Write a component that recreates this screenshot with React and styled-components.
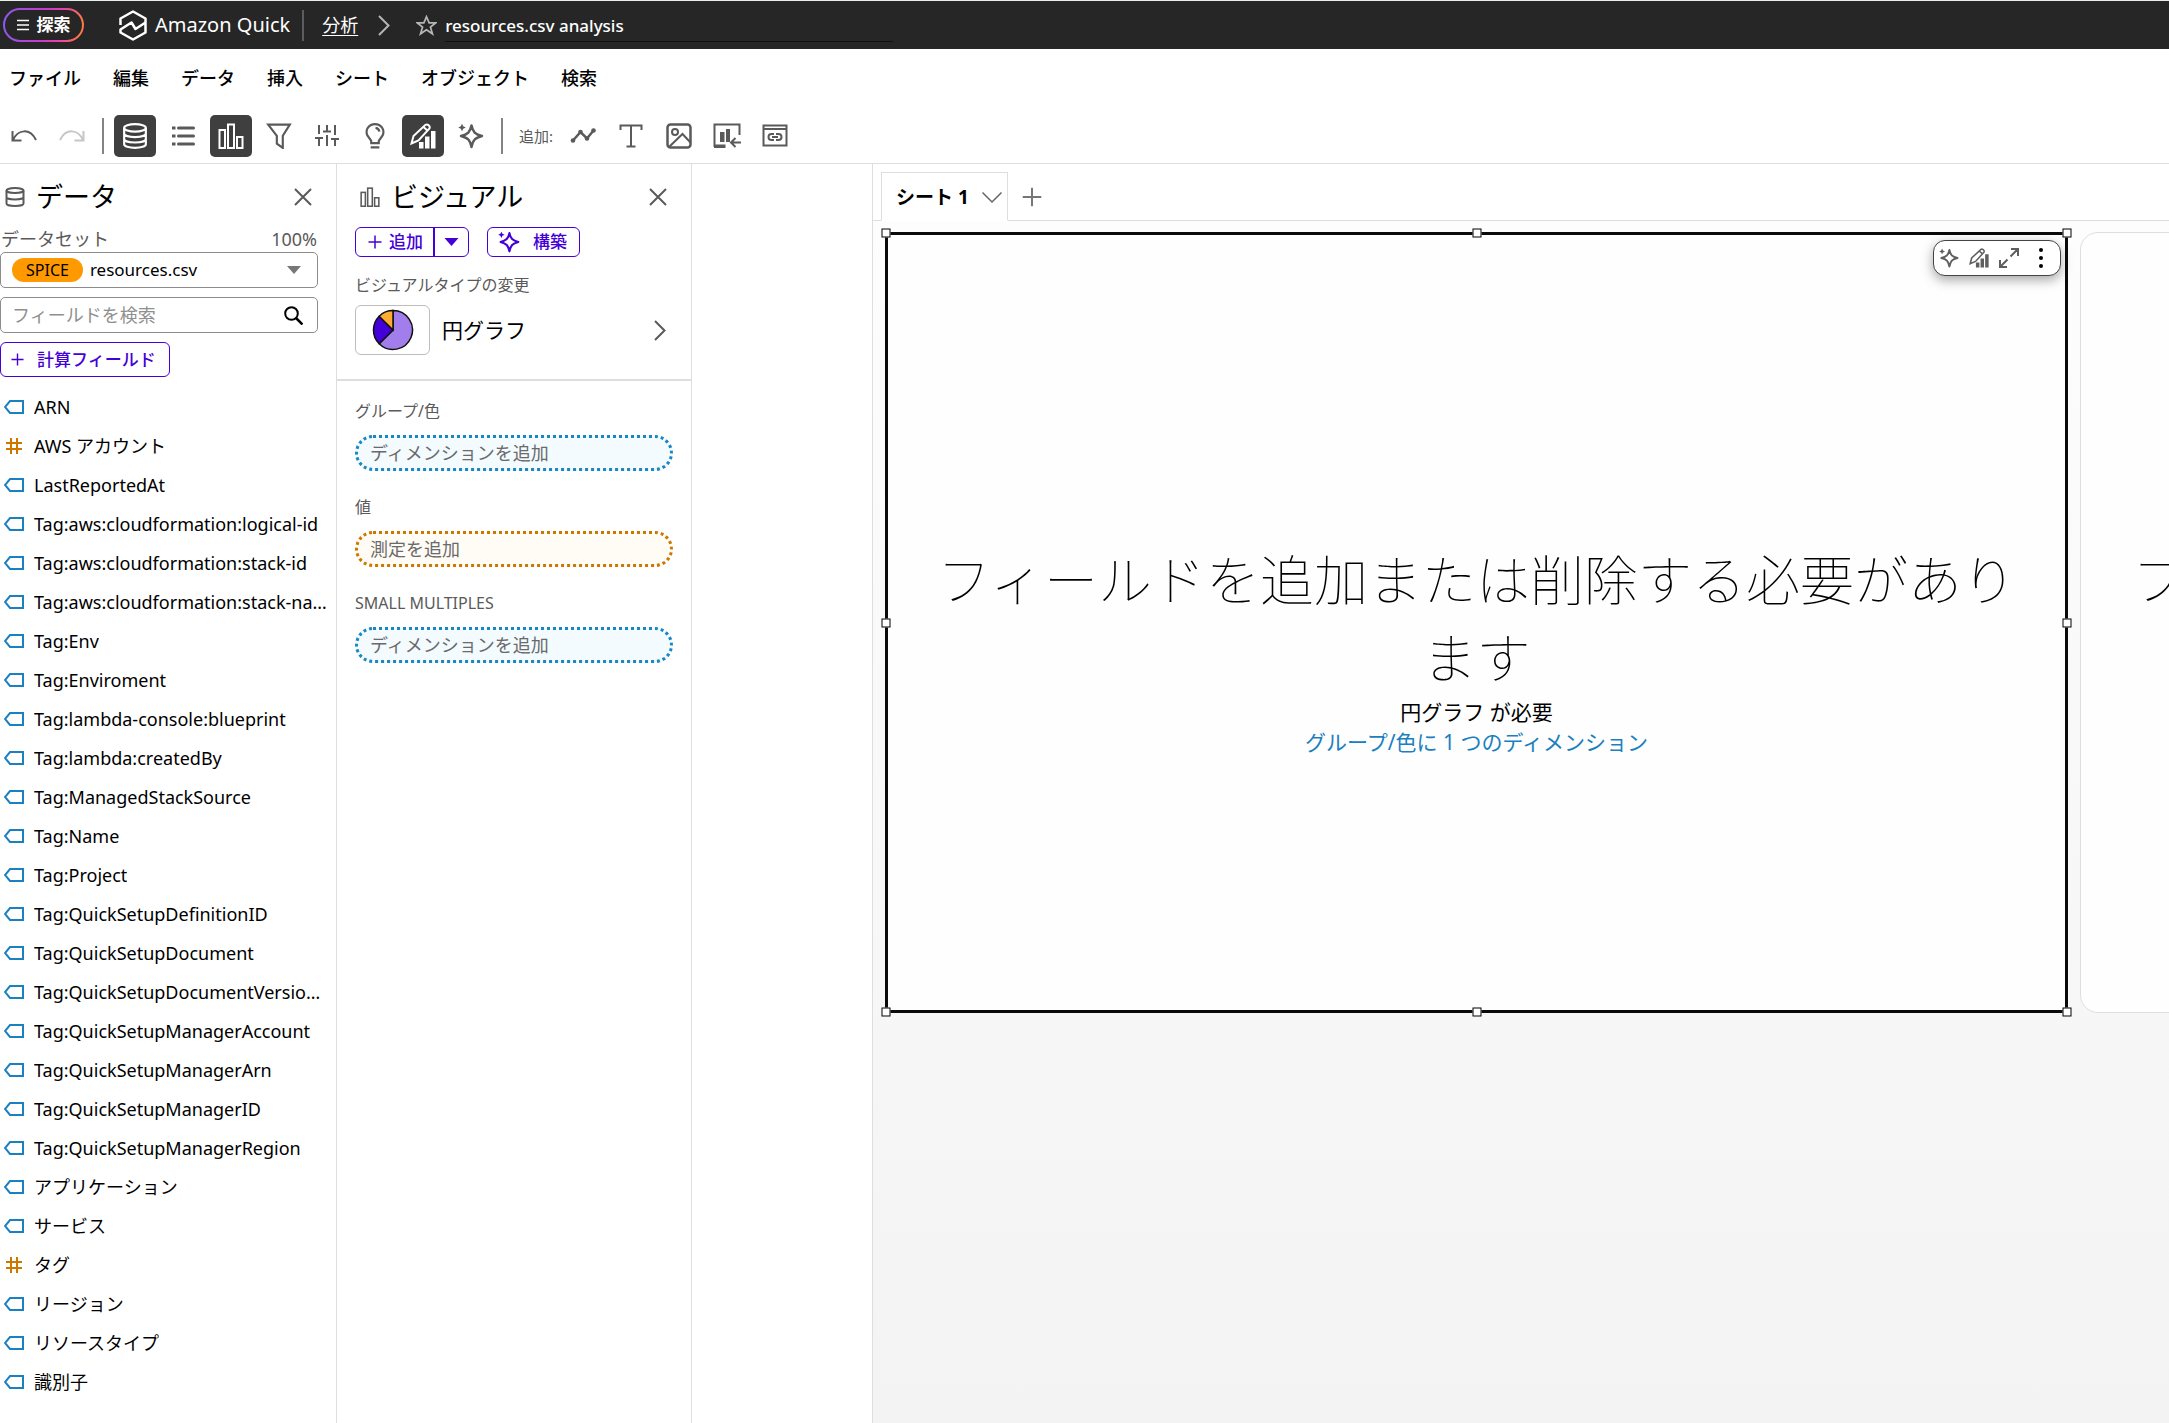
import React, { useState } from "react";
import styled, { createGlobalStyle, css } from "styled-components";

const GlobalStyle = createGlobalStyle`
  * {
    box-sizing: border-box;
  }

  body {
    margin: 0;
    background: #fff;
    color: #000;
    font-family: "Noto Sans", "Noto Sans CJK JP", sans-serif;
    font-size: 18px;
    line-height: 24px;
    overflow: hidden;
  }

  button, input, select {
    font: inherit;
    color: inherit;
    margin: 0;
    padding: 0;
    border: 0;
    background: none;
  }

  svg {
    display: block;
    flex: none;
  }

  h2 {
    margin: 0;
  }
`;

const Page = styled.div`
  display: flex;
  flex-direction: column;
  height: 100vh;
`;

/* ---------- header ---------- */

const Header = styled.header`
  display: flex;
  align-items: center;
  height: 49px;
  padding-left: 3px;
  background: #262626;
  border-top: 1px solid #e6efea;
  color: #fff;
`;

const ExploreButton = styled.button`
  display: flex;
  align-items: center;
  justify-content: center;
  gap: 8px;
  width: 81px;
  height: 34px;
  border: 2px solid transparent;
  border-radius: 17px;
  background:
    linear-gradient(#262626, #262626) padding-box,
    linear-gradient(100deg, #8a5cf0 0%, #c03ccf 45%, #e83fb0 70%, #ff7a45 95%) border-box;
  font-size: 17px;
  font-weight: 700;
`;

const Brand = styled.a`
  display: flex;
  align-items: center;
  gap: 8px;
  margin-left: 35px;
  padding-right: 12px;
  border-right: 2px solid #5c5c5c;
  color: #fff;
  font-size: 20px;
  line-height: 30px;
  text-decoration: none;
`;

const Crumb = styled.a`
  margin: 0 20px 0 18px;
  color: #fff;
  text-decoration: underline;
  text-underline-offset: 3px;
`;

const AnalysisTitle = styled.div`
  display: flex;
  align-items: center;
  gap: 8px;
  margin-left: 26px;
  font-size: 17px;
  font-weight: 500;
`;

const TitleText = styled.span`
  width: 448px;
  padding: 5px 4px 3px 0;
  border-bottom: 1px solid #111;
`;

const MenuBar = styled.nav`
  display: flex;
  align-items: center;
  gap: 32px;
  height: 58px;
  padding-left: 9px;
`;

const MenuItem = styled.button`
  font-weight: 500;
`;

/* ---------- toolbar ---------- */

const Toolbar = styled.div`
  display: flex;
  align-items: center;
  gap: 6px;
  height: 57px;
  padding: 1px 0 0 3px;
  border-bottom: 1px solid #dedede;
`;

const ToolButton = styled.button`
  display: grid;
  place-items: center;
  width: 42px;
  height: 42px;
  border-radius: 5px;
  color: ${(p) => (p.$on ? "#fff" : p.$faded ? "#c6c6c6" : "#5a5a5a")};
  background: ${(p) => (p.$on ? "#3f3f3f" : "transparent")};
`;

const ToolDivider = styled.span`
  width: 2px;
  height: 36px;
  margin: 0 ${(p) => p.$right}px 0 ${(p) => p.$left}px;
  background: #848484;
`;

const ToolLabel = styled.span`
  margin-right: 3px;
  color: #5a5a5a;
  font-size: 15px;
`;

/* ---------- panels ---------- */

const Workspace = styled.div`
  display: flex;
  flex: 1;
  min-height: 0;
`;

const Panel = styled.section`
  flex: none;
  width: ${(p) => p.$width}px;
  border-right: 1px solid #dedede;
`;

const PanelHeader = styled.div`
  display: flex;
  align-items: center;
  gap: 11px;
  padding: ${(p) => p.$pad};
  color: #5a5a5a;

  h2 {
    flex: 1;
    color: #000;
    font-size: 27px;
    font-weight: 400;
    line-height: 36px;
  }
`;

const CloseButton = styled.button`
  display: grid;
  place-items: center;
  width: 24px;
  height: 24px;
`;

const DataBody = styled.div`
  display: flex;
  flex-direction: column;
  gap: 9px;
  padding-right: 18px;
`;

const DatasetLine = styled.div`
  display: flex;
  justify-content: space-between;
  padding: 0 1px;
  color: #5a5a5a;
`;

const boxed = css`
  display: flex;
  align-items: center;
  height: 36px;
  border: 1px solid #8c8c8c;
  border-radius: 5px;
`;

const DatasetBox = styled.div`
  ${boxed}
  gap: 7px;
  margin-top: -8px;
  padding: 0 16px 0 11px;

  select {
    flex: 1;
    min-width: 0;
    appearance: none;
    font-size: 17px;
  }

  > svg {
    color: #777;
  }
`;

const SpiceBadge = styled.span`
  padding: 0 14px;
  border-radius: 12px;
  background: #ff9900;
  font-size: 16px;
`;

const SearchBox = styled.div`
  ${boxed}
  padding: 0 14px 0 11px;

  input {
    flex: 1;
    min-width: 0;
    outline: 0;
  }

  input::placeholder {
    color: #8f8f8f;
    opacity: 1;
  }
`;

const outlined = css`
  border: 1px solid #4400d8;
  border-radius: 6px;
  color: #4400d8;
  font-size: 17px;
  font-weight: 500;
`;

const CalcButton = styled.button`
  ${outlined}
  display: flex;
  align-items: center;
  align-self: flex-start;
  gap: 13px;
  height: 35px;
  padding: 0 13px 0 10px;
`;

const FieldList = styled.ul`
  margin: 10px 0 0;
  padding: 0;
  list-style: none;
`;

const FieldRow = styled.li`
  display: flex;
  align-items: center;
  gap: 10px;
  height: 39px;
  padding: 0 4px;

  span {
    overflow: hidden;
    text-overflow: ellipsis;
    white-space: nowrap;
  }
`;

const VisualTop = styled.div`
  padding: 0 18px 24px;
  border-bottom: 2px solid #dedede;
`;

const ButtonRow = styled.div`
  display: flex;
  gap: 18px;
  margin-bottom: 16px;
`;

const SplitButton = styled.div`
  ${outlined}
  display: flex;
  height: 30px;
`;

const AddButton = styled.button`
  display: flex;
  align-items: center;
  gap: 7px;
  padding: 0 10px 0 12px;
  border-right: 2px solid #4400d8;
`;

const AddMenuButton = styled.button`
  display: grid;
  place-items: center;
  width: 33px;
`;

const BuildButton = styled.button`
  ${outlined}
  display: flex;
  align-items: center;
  gap: 13px;
  height: 30px;
  padding: 0 12px 0 10px;
`;

const SmallLabel = styled.div`
  color: #5a5a5a;
  font-size: 16px;
`;

const TypeRow = styled.button`
  display: flex;
  align-items: center;
  gap: 12px;
  width: 100%;
  margin-top: 8px;
  padding-right: 7px;
  font-size: 21px;
  text-align: left;

  span {
    flex: 1;
  }
`;

const TypePreview = styled.div`
  display: grid;
  place-items: center;
  width: 75px;
  height: 50px;
  border: 1px solid #bdbdbd;
  border-radius: 6px;
`;

const Wells = styled.div`
  display: flex;
  flex-direction: column;
  gap: 24px;
  padding: 18px;
`;

const Well = styled.div`
  display: flex;
  flex-direction: column;
  gap: 12px;
`;

const DropZone = styled.button`
  height: 36px;
  padding-left: 12px;
  border: 3px dotted ${(p) => (p.$measure ? "#cc7700" : "#1a86c4")};
  border-radius: 18px;
  background: ${(p) => (p.$measure ? "#fffcf6" : "#f3fbff")};
  color: #6a6a6a;
  line-height: 28px;
  text-align: left;
`;

/* ---------- sheet ---------- */

const Sheet = styled.main`
  display: flex;
  flex: 1;
  flex-direction: column;
  min-width: 0;
  margin-left: 180px;
  border-left: 1px solid #dedede;
`;

const TabStrip = styled.div`
  display: flex;
  align-items: flex-end;
  height: 57px;
  padding-left: 8px;
  box-shadow: inset 0 -1px #dedede;
`;

const SheetTab = styled.button`
  display: flex;
  align-items: center;
  gap: 13px;
  height: 49px;
  padding: 0 5px 0 14px;
  border: 1px solid #dedede;
  border-bottom-color: #fff;
  background: #fff;
  font-size: 19px;
  font-weight: 700;
`;

const AddSheetButton = styled.button`
  display: grid;
  place-items: center;
  width: 49px;
  height: 49px;
  color: #777;
`;

const Canvas = styled.div`
  display: flex;
  flex: 1;
  align-items: flex-start;
  gap: 12px;
  padding: 11px 0 0 12px;
  background: linear-gradient(#fdfdfd, #f3f3f3);
  overflow: hidden;
`;

const VisualCard = styled.article`
  position: relative;
  display: flex;
  flex: 0 0 calc(100% - 101px);
  flex-direction: column;
  align-items: center;
  justify-content: center;
  min-height: 781px;
  padding: 52px 36px 0;
  border: ${(p) => (p.$selected ? "3px solid #0a0a0a" : "1px solid #dedede")};
  border-radius: ${(p) => (p.$selected ? 0 : 18)}px;
  background: #fefefe;
  font-size: 21px;
  line-height: 30px;
  text-align: center;

  h2 {
    font-size: 54px;
    font-weight: 100;
    line-height: 78px;
    word-break: break-all;
  }

  a {
    color: #1a80c0;
    text-decoration: none;
  }
`;

const HandleFrame = styled.div`
  position: absolute;
  inset: -2px;
  pointer-events: none;
`;

const Handle = styled.i`
  position: absolute;
  left: ${(p) => p.$x}%;
  top: ${(p) => p.$y}%;
  width: 9px;
  height: 9px;
  border: 1px solid #000;
  background: #fff;
  transform: translate(-50%, -50%);
`;

const VisualTools = styled.div`
  position: absolute;
  top: 5px;
  right: 4px;
  display: flex;
  align-items: center;
  height: 36px;
  padding: 0 3px 0 0;
  border: 1px solid #444;
  border-radius: 12px;
  background: #fff;
  box-shadow: 0 4px 12px rgba(0, 0, 0, 0.35);
  color: #5f5f5f;

  button {
    display: grid;
    place-items: center;
    width: 30px;
    height: 34px;
  }

  button:last-child {
    width: 33px;
    color: #000;
  }
`;

/* ---------- icons ---------- */

const Icon = ({ size = 24, box = 24, width = 2, children }) => (
  <svg
    width={size}
    height={size}
    viewBox={`0 0 ${box} ${box}`}
    fill="none"
    stroke="currentColor"
    strokeWidth={width}
    aria-hidden="true"
  >
    {children}
  </svg>
);

const UndoIcon = () => (
  <Icon size={26} box={26}>
    <path d="M1.500 8v9.500h9M2 17C7 6 19 5 25 17" />
  </Icon>
);

const RedoIcon = () => (
  <Icon size={26} box={26}>
    <path d="M24.500 8v9.500h-9M24 17C19 6 7 5 1 17" />
  </Icon>
);

const DatabaseIcon = ({ size = 26, width = 2 }) => (
  <Icon size={size} width={width}>
    <ellipse cx="12" cy="4.500" rx="10" ry="3.500" />
    <path d="M2 4.500v15C2 21.500 6.500 23 12 23s10-1.500 10-3.500v-15M2 9.700c0 2 4.500 3.300 10 3.300s10-1.300 10-3.300M2 14.700C2 16.700 6.500 18 12 18s10-1.300 10-3.300" />
  </Icon>
);

// panel title version, with one band only
const SmallDatabaseIcon = () => (
  <Icon size={20} box={20}>
    <ellipse cx="10" cy="3.500" rx="8.500" ry="2.500" />
    <path d="M1.500 3.500v13c0 1.500 3.800 2.500 8.500 2.500s8.500-1 8.500-2.500v-13M1.500 10c0 1.500 3.800 2.500 8.500 2.500s8.500-1 8.500-2.500" />
  </Icon>
);

const ListIcon = () => (
  <Icon width={3}>
    <path d="M7.500 4h15M7.500 12h15M7.500 20h15" strokeLinecap="round" />
    <path d="M1 4h3.500M1 12h3.500M1 20h3.500" />
  </Icon>
);

const BarsIcon = ({ size = 26, width = 2 }) => (
  <Icon size={size} width={width} box={26}>
    <rect x="1.500" y="7" width="5.500" height="18" />
    <rect x="10" y="1.500" width="6" height="23.500" />
    <rect x="19" y="14" width="5.500" height="11" />
  </Icon>
);

const FilterIcon = () => (
  <Icon size={26}>
    <path d="M2 1.500h20l-6.500 10.300V23l-5.500-4v-7.200z" />
  </Icon>
);

const SlidersIcon = () => (
  <Icon>
    <path d="M4 1v9M0 14h8M4 14v8M12 1v6M8 7.500h8M12 11v11M20 1v10M16 15h8M20 15v7" />
  </Icon>
);

const BulbIcon = () => (
  <Icon size={26}>
    <path d="M8.500 18.500v-2L5 11.500C2.500 6 6.500 1 12 1s9.500 5 7 10.500l-3.500 5v2zM8 22.500h8M12.500 4.500c2 .3 3.300 1.600 3.500 3.500" />
  </Icon>
);

const EditChartIcon = ({ size = 26 }) => (
  <Icon size={size} box={26}>
    <path d="M1.500 20.500l2-7.500L15.500 1.800c2-1.200 5 1.400 4 3.600L8.500 17.500zM14 4.500l4 3.500" />
    <path d="M9 19h4.500v6.500H9zM15 13.500h4.500v12H15zM21 8h4.500v17.500H21z" fill="currentColor" stroke="none" />
  </Icon>
);

const SparkleIcon = ({ size = 26 }) => (
  <Icon size={size} box={26}>
    <path
      d="M13.500 2.500c1.500 6.500 3.500 8.800 10.500 10.500-7 1.700-9 4-10.500 11-1.500-7-3.500-9.300-10.500-11 7-1.700 9-4 10.500-10.500z"
      strokeLinejoin="round"
      strokeWidth="2.500"
    />
    <path d="M4 .8l1.200 2.500L7.800 4.500 5.200 5.700 4 8.200 2.800 5.700.3 4.500l2.500-1.200z" fill="currentColor" stroke="none" />
  </Icon>
);

const LineIcon = () => (
  <Icon size={26} box={26} width={2.5}>
    <path d="M3 17.500L10.500 9l6.500 6.500 6.500-8" />
    <g fill="currentColor" stroke="none">
      <circle cx="3" cy="17.500" r="2.300" />
      <circle cx="10.500" cy="9" r="2.300" />
      <circle cx="17" cy="15.500" r="2.300" />
      <circle cx="23.500" cy="7.500" r="2.300" />
    </g>
  </Icon>
);

const TextIcon = () => (
  <Icon>
    <path d="M1.500 6V1.500h21V6M12 1.500v21M7.500 22.500h9" />
  </Icon>
);

const ImageIcon = () => (
  <Icon size={26} box={26}>
    <rect x="1.500" y="1.500" width="23" height="23" rx="3" strokeWidth="2.500" />
    <circle cx="9" cy="9" r="3" />
    <path d="M3.500 23.500L16.500 11l8 8.500" />
  </Icon>
);

const InsertChartIcon = () => (
  <Icon size={28} box={28}>
    <path d="M1.500 25V2.500h25V13M28 20.500H18M22.500 16L18 20.500l4.500 4.500" />
    <path d="M7 10h4.500v10H7zM13 7h4v13h-4zM1 22.500h11.500V26H1z" fill="currentColor" stroke="none" />
  </Icon>
);

const EmbedIcon = () => (
  <Icon size={26} box={26}>
    <rect x="1.500" y="2.500" width="23" height="20" />
    <path d="M1.500 6h23" />
    <path d="M12 11h-2.500a3 3 0 0 0 0 6H12M14 11h2.500a3 3 0 0 1 0 6H14M10 14h6" />
  </Icon>
);

const CloseIcon = () => (
  <Icon size={18} box={18}>
    <path d="M1 1l16 16M17 1L1 17" />
  </Icon>
);

const PlusIcon = ({ size = 14, width = 1.5 }) => (
  <Icon size={size} box={14} width={width}>
    <path d="M7 .5v13M.5 7h13" />
  </Icon>
);

const CaretIcon = ({ size = 14 }) => (
  <svg width={size} height="8" viewBox="0 0 14 8" fill="currentColor" aria-hidden="true">
    <path d="M0 0h14L7 8z" />
  </svg>
);

const ChevronIcon = ({ color }) => (
  <svg width="12" height="21" viewBox="0 0 12 21" fill="none" stroke={color} strokeWidth="2" aria-hidden="true">
    <path d="M1 1l9.500 9.500L1 20" />
  </svg>
);

const SearchIcon = () => (
  <Icon size={19} box={19} width={2}>
    <circle cx="7.500" cy="7.500" r="6.300" />
    <path d="M12 12l6.500 6.500" strokeWidth="2.500" />
  </Icon>
);

const StarIcon = () => (
  <Icon size={21} width={2}>
    <path d="M12 2l3 7h7.500l-6 4.800 2.300 7.700-6.800-4.600-6.800 4.600 2.300-7.700-6-4.800H9z" stroke="#b5b5b5" />
  </Icon>
);

const QuickLogo = () => (
  <svg width="28" height="31" viewBox="0 0 28 31" fill="none" stroke="#fff" strokeWidth="2.500" aria-hidden="true">
    <path d="M1.500 15V8.500L14 1.500l12.500 7v4L16.500 19l-4-6.500L1.500 19.500V22.500L14 29.500l12.500-7V13" strokeLinejoin="round" />
  </svg>
);

const PieIcon = () => (
  <svg width="42" height="42" viewBox="-21 -21 42 42" stroke="#111" strokeWidth="1.500" aria-hidden="true">
    <path d="M0 0V-19.500A19.500 19.500 0 1 1-13.800 13.800z" fill="#a17eec" />
    <path d="M0 0L-13.800 13.800A19.500 19.500 0 0 1-13.800-13.800z" fill="#4400d8" />
    <path d="M0 0L-13.800-13.800A19.500 19.500 0 0 1 0-19.500z" fill="#ffac33" />
  </svg>
);

const StringFieldIcon = () => (
  <svg width="20" height="14" viewBox="0 0 20 14" fill="none" stroke="#1a80c0" strokeWidth="2" aria-hidden="true">
    <path d="M6 1h13v12H6L1 7z" />
  </svg>
);

const NumberFieldIcon = () => (
  <svg width="20" height="16" viewBox="0 0 20 16" fill="none" stroke="#cc7700" strokeWidth="2" aria-hidden="true">
    <path d="M7 0v16M13 0v16M2 5h16M2 11h16" />
  </svg>
);

const ExpandIcon = () => (
  <Icon size={20} box={20}>
    <path d="M12 1h7v7M19 1l-7.500 7.500M8 19H1v-7M1 19l7.500-7.500" />
  </Icon>
);

const DotsIcon = () => (
  <svg width="4" height="20" viewBox="0 0 4 20" fill="currentColor" aria-hidden="true">
    <circle cx="2" cy="2" r="2" />
    <circle cx="2" cy="10" r="2" />
    <circle cx="2" cy="18" r="2" />
  </svg>
);

/* ---------- data ---------- */

const menus = ["ファイル", "編集", "データ", "挿入", "シート", "オブジェクト", "検索"];

const fields = [
  "ARN",
  "AWS アカウント",
  "LastReportedAt",
  "Tag:aws:cloudformation:logical-id",
  "Tag:aws:cloudformation:stack-id",
  "Tag:aws:cloudformation:stack-na…",
  "Tag:Env",
  "Tag:Enviroment",
  "Tag:lambda-console:blueprint",
  "Tag:lambda:createdBy",
  "Tag:ManagedStackSource",
  "Tag:Name",
  "Tag:Project",
  "Tag:QuickSetupDefinitionID",
  "Tag:QuickSetupDocument",
  "Tag:QuickSetupDocumentVersio…",
  "Tag:QuickSetupManagerAccount",
  "Tag:QuickSetupManagerArn",
  "Tag:QuickSetupManagerID",
  "Tag:QuickSetupManagerRegion",
  "アプリケーション",
  "サービス",
  "タグ",
  "リージョン",
  "リソースタイプ",
  "識別子",
];

const numberFields = ["AWS アカウント", "タグ"];

const wells = [
  { label: "グループ/色", hint: "ディメンションを追加" },
  { label: "値", hint: "測定を追加", measure: true },
  { label: "SMALL MULTIPLES", hint: "ディメンションを追加" },
];

const handles = [
  [0, 0],
  [50, 0],
  [100, 0],
  [0, 50],
  [100, 50],
  [0, 100],
  [50, 100],
  [100, 100],
];

const EmptyVisual = () => (
  <>
    <h2>フィールドを追加または削除する必要があります</h2>
    <div>円グラフ が必要</div>
    <a href="#group">グループ/色に 1 つのディメンション</a>
  </>
);

function App() {
  const [search, setSearch] = useState("");

  return (
    <Page>
      <GlobalStyle />
      <Header>
        <ExploreButton>
          <Icon size={12} box={12} width={1.5}>
            <path d="M0 1.500h12M0 6h12M0 10.500h12" />
          </Icon>
          探索
        </ExploreButton>
        <Brand href="#home">
          <QuickLogo />
          Amazon Quick
        </Brand>
        <Crumb href="#analyses">分析</Crumb>
        <ChevronIcon color="#b5b5b5" />
        <AnalysisTitle>
          <StarIcon />
          <TitleText>resources.csv analysis</TitleText>
        </AnalysisTitle>
      </Header>

      <MenuBar>
        {menus.map((m) => (
          <MenuItem key={m}>{m}</MenuItem>
        ))}
      </MenuBar>

      <Toolbar>
        <ToolButton aria-label="元に戻す"><UndoIcon /></ToolButton>
        <ToolButton aria-label="やり直す" $faded><RedoIcon /></ToolButton>
        <ToolDivider $left={3} $right={4} />
        <ToolButton aria-label="データ" $on><DatabaseIcon /></ToolButton>
        <ToolButton aria-label="一覧"><ListIcon /></ToolButton>
        <ToolButton aria-label="ビジュアル" $on><BarsIcon /></ToolButton>
        <ToolButton aria-label="フィルター"><FilterIcon /></ToolButton>
        <ToolButton aria-label="パラメータ"><SlidersIcon /></ToolButton>
        <ToolButton aria-label="インサイト"><BulbIcon /></ToolButton>
        <ToolButton aria-label="プロパティ" $on><EditChartIcon /></ToolButton>
        <ToolButton aria-label="構築"><SparkleIcon /></ToolButton>
        <ToolDivider $left={3} $right={10} />
        <ToolLabel>追加:</ToolLabel>
        <ToolButton aria-label="ビジュアルを追加"><LineIcon /></ToolButton>
        <ToolButton aria-label="テキストを追加"><TextIcon /></ToolButton>
        <ToolButton aria-label="画像を追加"><ImageIcon /></ToolButton>
        <ToolButton aria-label="ビジュアルを挿入"><InsertChartIcon /></ToolButton>
        <ToolButton aria-label="埋め込み"><EmbedIcon /></ToolButton>
      </Toolbar>

      <Workspace>
        <Panel $width={337}>
          <PanelHeader $pad="15px 21px 12px 5px">
            <SmallDatabaseIcon />
            <h2>データ</h2>
            <CloseButton aria-label="閉じる"><CloseIcon /></CloseButton>
          </PanelHeader>
          <DataBody>
            <DatasetLine>
              <label htmlFor="dataset">データセット</label>
              <span>100%</span>
            </DatasetLine>
            <DatasetBox>
              <SpiceBadge>SPICE</SpiceBadge>
              <select id="dataset">
                <option>resources.csv</option>
              </select>
              <CaretIcon />
            </DatasetBox>
            <SearchBox>
              <input
                aria-label="フィールドを検索"
                placeholder="フィールドを検索"
                value={search}
                onChange={(e) => setSearch(e.target.value)}
              />
              <SearchIcon />
            </SearchBox>
            <CalcButton>
              <PlusIcon size={13} />
              計算フィールド
            </CalcButton>
          </DataBody>
          <FieldList>
            {fields
              .filter((f) => f.toLowerCase().includes(search.toLowerCase()))
              .map((f) => (
                <FieldRow key={f}>
                  {numberFields.includes(f) ? <NumberFieldIcon /> : <StringFieldIcon />}
                  <span>{f}</span>
                </FieldRow>
              ))}
          </FieldList>
        </Panel>

        <Panel $width={355}>
          <PanelHeader $pad="15px 21px 12px 23px">
            <BarsIcon size={20} />
            <h2>ビジュアル</h2>
            <CloseButton aria-label="閉じる"><CloseIcon /></CloseButton>
          </PanelHeader>
          <VisualTop>
            <ButtonRow>
              <SplitButton>
                <AddButton>
                  <PlusIcon />
                  追加
                </AddButton>
                <AddMenuButton aria-label="追加メニュー"><CaretIcon size={15} /></AddMenuButton>
              </SplitButton>
              <BuildButton>
                <SparkleIcon size={22} />
                構築
              </BuildButton>
            </ButtonRow>
            <SmallLabel>ビジュアルタイプの変更</SmallLabel>
            <TypeRow>
              <TypePreview><PieIcon /></TypePreview>
              <span>円グラフ</span>
              <ChevronIcon color="#5a5a5a" />
            </TypeRow>
          </VisualTop>
          <Wells>
            {wells.map((w) => (
              <Well key={w.label}>
                <SmallLabel>{w.label}</SmallLabel>
                <DropZone $measure={w.measure}>{w.hint}</DropZone>
              </Well>
            ))}
          </Wells>
        </Panel>

        <Sheet>
          <TabStrip>
            <SheetTab>
              シート 1
              <Icon size={20} box={20} width={1.5}>
                <path d="M.5 5.500l9.500 9.500 9.500-9.500" stroke="#666" />
              </Icon>
            </SheetTab>
            <AddSheetButton aria-label="シートを追加"><PlusIcon size={20} width={1.4} /></AddSheetButton>
          </TabStrip>
          <Canvas>
            <VisualCard $selected>
              <EmptyVisual />
              <VisualTools>
                <button aria-label="構築"><SparkleIcon size={20} /></button>
                <button aria-label="プロパティ"><EditChartIcon size={20} /></button>
                <button aria-label="最大化"><ExpandIcon /></button>
                <button aria-label="メニュー"><DotsIcon /></button>
              </VisualTools>
              <HandleFrame>
                {handles.map(([x, y]) => (
                  <Handle key={`${x}-${y}`} $x={x} $y={y} />
                ))}
              </HandleFrame>
            </VisualCard>
            <VisualCard>
              <EmptyVisual />
            </VisualCard>
          </Canvas>
        </Sheet>
      </Workspace>
    </Page>
  );
}

export default App;
